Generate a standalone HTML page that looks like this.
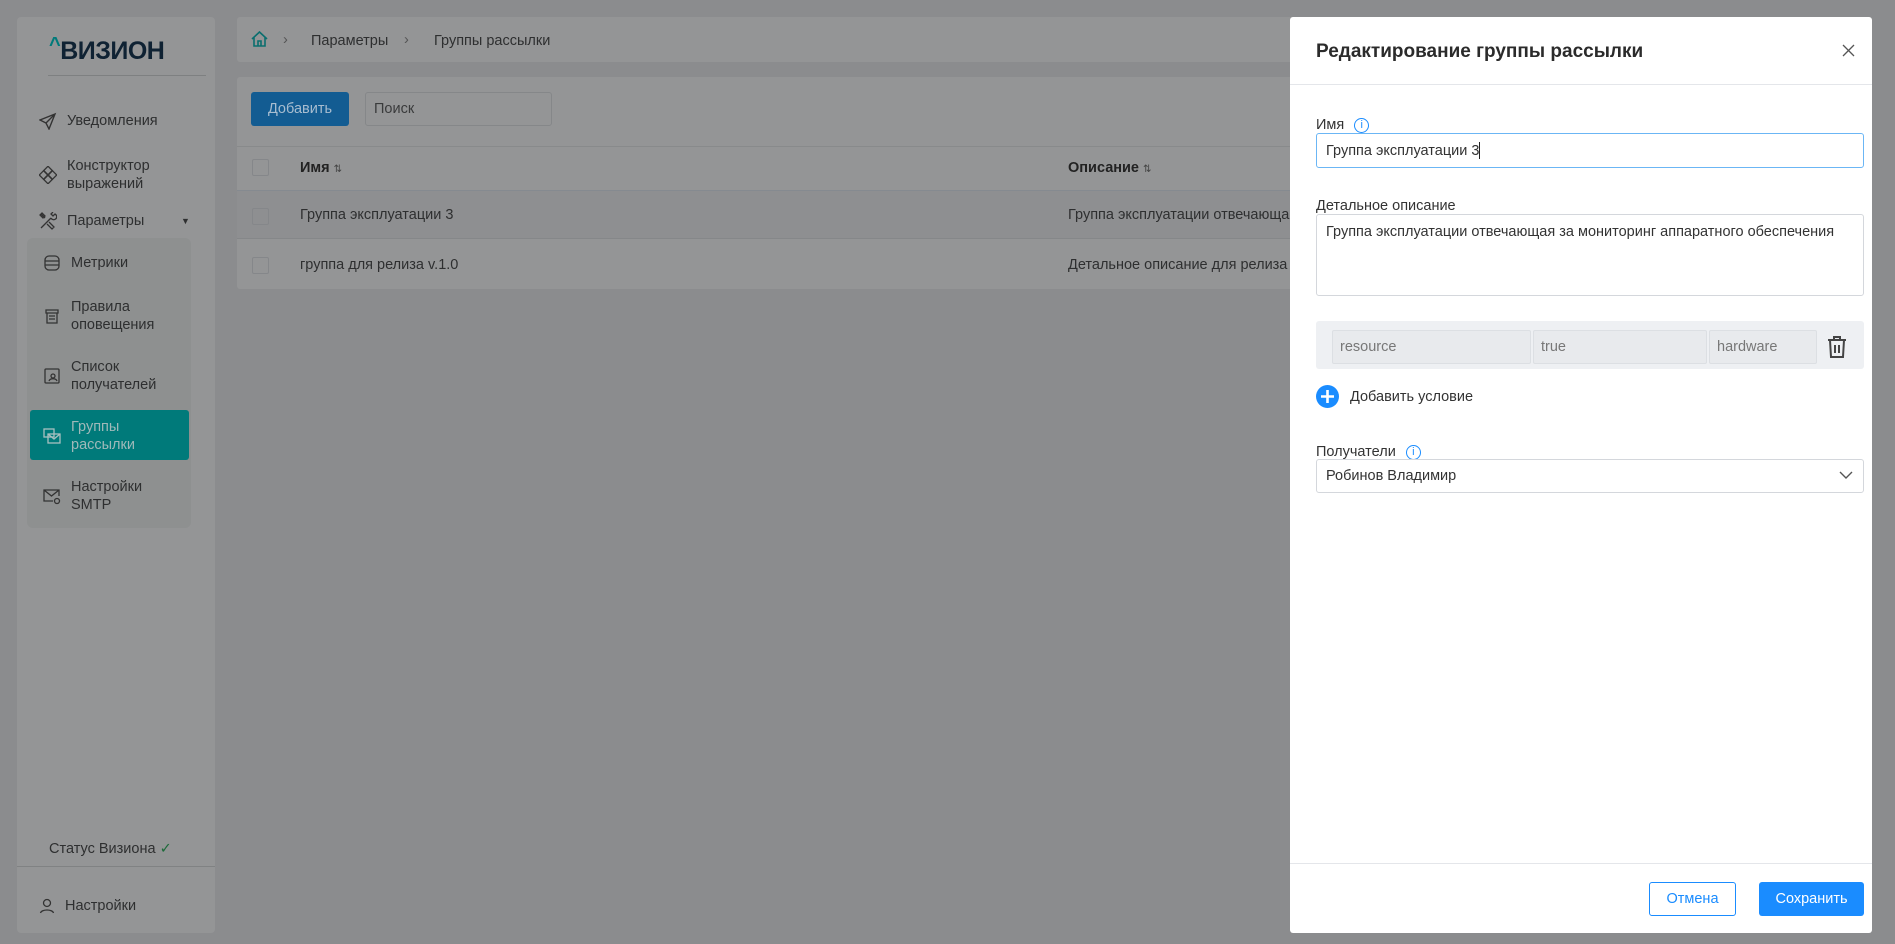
<!DOCTYPE html>
<html><head><meta charset="utf-8"><style>
*{box-sizing:border-box;margin:0;padding:0}
body{width:1895px;height:944px;overflow:hidden;background:#8b8c8e;font-family:"Liberation Sans",sans-serif;font-size:14.5px;color:#2a2a2a;position:relative}
.abs{position:absolute}
.side{left:17px;top:17px;width:198px;height:916px;background:#949596;border-radius:4px}
.mi{position:absolute;left:40px;color:#2e2f30;font-size:14.5px;line-height:18px;display:flex;align-items:center}
.mi svg{margin-right:10px;flex:none}
.card{background:#949596;border-radius:3px}
.dr{left:1290px;top:17px;width:582px;height:916px;background:#fff;border-radius:3px}
.lab{position:absolute;left:26px;font-size:14.5px;color:#333;display:flex;align-items:center}
.inp{position:absolute;left:26px;width:548px;border:1px solid #d4d7dc;border-radius:3px;padding:0 9px;display:flex;align-items:center;font-size:14.5px;color:#333}
.info{display:inline-block;width:15px;height:15px;border:1.3px solid #1a8cff;border-radius:50%;color:#1a8cff;font-size:11px;text-align:center;line-height:13px;margin-left:10px}
</style></head><body>
<div class="abs side">
 <div class="abs" style="left:32px;top:20px;font-size:25px;font-weight:bold;color:#0f2233;letter-spacing:-0.5px"><span style="color:#007a7a;font-size:20px;vertical-align:top;position:relative;top:-3px">^</span>ВИЗИОН</div>
 <div class="abs" style="left:31px;top:58px;width:158px;height:1px;background:#7e8081"></div>
 <div class="mi" style="top:95px;left:22px"><svg width="18" height="18" viewBox="0 0 18 18" fill="none" stroke="#333" stroke-width="1.4"><path d="M16 2L1 8l6 3 3 6z M16 2L7 11"/></svg>Уведомления</div>
 <div class="mi" style="top:140px;left:22px"><svg width="18" height="18" viewBox="0 0 18 18" fill="none" stroke="#333" stroke-width="1.3"><rect x="6" y="1.5" width="6" height="6" transform="rotate(45 9 4.5)"/><rect x="6" y="10.5" width="6" height="6" transform="rotate(45 9 13.5)"/><rect x="1.5" y="6" width="6" height="6" transform="rotate(45 4.5 9)"/><rect x="10.5" y="6" width="6" height="6" transform="rotate(45 13.5 9)"/></svg>Конструктор<br>выражений</div>
 <div class="mi" style="top:195px;left:22px"><svg width="18" height="18" viewBox="0 0 18 18" fill="none" stroke="#333" stroke-width="1.3"><path d="M2 16L12 6M12 6a3 3 0 1 0 4-4l-2 2-2-2 2-2M2 2l4 4M3 1l3 3-2 2-3-3zM10 10l5 5-2 2-5-5"/></svg>Параметры<span style="position:absolute;left:142px;font-size:9px">▼</span></div>
 <div class="abs" style="left:10px;top:221px;width:164px;height:290px;background:#8e9090;border-radius:6px"></div>
 <div class="mi" style="top:237px;left:26px"><svg width="18" height="18" viewBox="0 0 18 18" fill="none" stroke="#333" stroke-width="1.3"><rect x="2" y="2" width="14" height="14" rx="4"/><path d="M2 7h14M2 11h14"/></svg>Метрики</div>
 <div class="mi" style="top:281px;left:26px"><svg width="18" height="18" viewBox="0 0 18 18" fill="none" stroke="#333" stroke-width="1.3"><path d="M3 3h12v3H3zM4 6v10h10V6M6 9h6M6 12h6"/></svg>Правила<br>оповещения</div>
 <div class="mi" style="top:341px;left:26px"><svg width="18" height="18" viewBox="0 0 18 18" fill="none" stroke="#333" stroke-width="1.3"><rect x="2" y="2" width="14" height="14" rx="1"/><circle cx="10" cy="9" r="2"/><path d="M6 14c1-3 7-3 8 0"/></svg>Список<br>получателей</div>
 <div class="abs" style="left:13px;top:393px;width:159px;height:50px;background:#007a7a;border-radius:3px"></div>
 <div class="mi" style="top:401px;left:26px;color:#9fb9b9"><svg width="18" height="18" viewBox="0 0 18 18" fill="none" stroke="#a8c0c0" stroke-width="1.3"><rect x="1" y="2" width="10" height="8"/><rect x="5" y="7" width="12" height="9"/><path d="M5 7l6 5 6-5"/></svg>Группы<br>рассылки</div>
 <div class="mi" style="top:461px;left:26px"><svg width="18" height="18" viewBox="0 0 18 18" fill="none" stroke="#333" stroke-width="1.3"><path d="M10 14H1V3h15v6M1 3l7.5 6L16 3"/><circle cx="14" cy="14" r="2.5"/></svg>Настройки<br>SMTP</div>
 <div class="abs" style="left:32px;top:824px;font-size:14.5px;color:#2e2f30">Статус Визиона <span style="color:#1d6a3a">✓</span></div>
 <div class="abs" style="left:0;top:849px;width:198px;height:1px;background:#808283"></div>
 <div class="mi" style="top:880px;left:22px"><svg width="16" height="16" viewBox="0 0 16 16" fill="none" stroke="#333" stroke-width="1.3"><circle cx="8" cy="5" r="3.5"/><path d="M1.5 15c1-4 12-4 13 0"/></svg>Настройки</div>
</div>
<div class="abs card" style="left:237px;top:17px;width:1100px;height:45px">
 <svg class="abs" style="left:14px;top:14px" width="17" height="16" viewBox="0 0 17 16" fill="none" stroke="#0a6e6e" stroke-width="1.6"><path d="M1 8L8.5 1 16 8M3 6v9h11V6M7 15v-5h3v5"/></svg>
 <span class="abs" style="left:46px;top:15px;color:#555">›</span>
 <span class="abs" style="left:74px;top:16px;color:#2e2f30">Параметры</span>
 <span class="abs" style="left:167px;top:15px;color:#555">›</span>
 <span class="abs" style="left:197px;top:16px;color:#2e2f30">Группы рассылки</span>
</div>
<div class="abs card" style="left:237px;top:77px;width:1100px;height:212px">
 <div class="abs" style="left:14px;top:15px;width:98px;height:34px;background:#135c92;border-radius:3px;color:#a8bdd0;text-align:center;line-height:34px">Добавить</div>
 <div class="abs" style="left:128px;top:15px;width:187px;height:34px;border:1px solid #858789;border-radius:3px;padding-left:8px;line-height:32px;color:#3a3b3c">Поиск</div>
 <div class="abs" style="left:0;top:69px;width:1100px;height:1px;background:#888a8b"></div>
 <div class="abs" style="left:0;top:113px;width:1100px;height:49px;background:#8e8f91;border-top:1px solid #858a90;border-bottom:1px solid #858789"></div>
 <div class="abs" style="left:15px;top:82px;width:17px;height:17px;border:1px solid #85878a;border-radius:2px"></div>
 <div class="abs" style="left:15px;top:131px;width:17px;height:17px;border:1px solid #85878a;border-radius:2px"></div>
 <div class="abs" style="left:15px;top:180px;width:17px;height:17px;border:1px solid #85878a;border-radius:2px"></div>
 <div class="abs" style="left:63px;top:83px;font-weight:bold;color:#222">Имя <span style="font-weight:normal;font-size:10px;color:#444">⇅</span></div>
 <div class="abs" style="left:831px;top:83px;font-weight:bold;color:#222">Описание <span style="font-weight:normal;font-size:10px;color:#444">⇅</span></div>
 <div class="abs" style="left:63px;top:130px;color:#2e2f30">Группа эксплуатации 3</div>
 <div class="abs" style="left:831px;top:130px;color:#2e2f30;white-space:nowrap">Группа эксплуатации отвечающа</div>
 <div class="abs" style="left:63px;top:180px;color:#2e2f30">группа для релиза v.1.0</div>
 <div class="abs" style="left:831px;top:180px;color:#2e2f30;white-space:nowrap">Детальное описание для релиза</div>
</div>
<div class="abs dr">
 <div class="abs" style="left:26px;top:24px;font-size:19px;font-weight:bold;color:#2b2b2b">Редактирование группы рассылки</div>
 <svg class="abs" style="left:552px;top:27px" width="13" height="13" viewBox="0 0 13 13" stroke="#555" stroke-width="1.3"><path d="M1 1l11 11M12 1L1 12"/></svg>
 <div class="abs" style="left:0;top:67px;width:582px;height:1px;background:#e4e6ea"></div>
 <div class="lab" style="top:100px">Имя<span class="info">i</span></div>
 <div class="inp" style="top:116px;height:35px;border:1.5px solid #6bb6f5">Группа эксплуатации 3<span style="width:1px;height:17px;background:#222"></span></div>
 <div class="lab" style="top:181px">Детальное описание</div>
 <div class="inp" style="top:197px;height:82px;align-items:flex-start;padding-top:9px">Группа эксплуатации отвечающая за мониторинг аппаратного обеспечения</div>
 <div class="abs" style="left:26px;top:304px;width:548px;height:48px;background:#eef0f3;border-radius:3px"></div>
 <div class="abs" style="left:42px;top:313px;width:199px;height:34px;background:#e8eaed;border:1px solid #dcdfe3;border-radius:2px;padding-left:7px;line-height:33px;color:#777">resource</div>
 <div class="abs" style="left:243px;top:313px;width:174px;height:34px;background:#e8eaed;border:1px solid #dcdfe3;border-radius:2px;padding-left:7px;line-height:33px;color:#777">true</div>
 <div class="abs" style="left:419px;top:313px;width:108px;height:34px;background:#e8eaed;border:1px solid #dcdfe3;border-radius:2px;padding-left:7px;line-height:33px;color:#777">hardware</div>
 <svg class="abs" style="left:536px;top:318px" width="22" height="24" viewBox="0 0 22 24" fill="none" stroke="#444" stroke-width="2"><path d="M2 5h18M8 5V2h6v3M4 5l1 17h12l1-17M9 10v8M13 10v8"/></svg>
 <svg class="abs" style="left:26px;top:368px" width="23" height="23" viewBox="0 0 23 23"><circle cx="11.5" cy="11.5" r="11.5" fill="#1a8cff"/><path d="M11.5 5v13M5 11.5h13" stroke="#fff" stroke-width="2.6"/></svg>
 <div class="abs" style="left:60px;top:372px;color:#333">Добавить условие</div>
 <div class="lab" style="top:427px">Получатели<span class="info">i</span></div>
 <div class="inp" style="top:442px;height:34px">Робинов Владимир<svg style="position:absolute;right:10px;top:11px" width="14" height="9" viewBox="0 0 14 9" fill="none" stroke="#555" stroke-width="1.4"><path d="M1 1l6 6 6-6"/></svg></div>
 <div class="abs" style="left:0;top:846px;width:582px;height:1px;background:#e4e6ea"></div>
 <div class="abs" style="left:359px;top:865px;width:87px;height:34px;border:1px solid #1a8cff;border-radius:3px;color:#1a8cff;text-align:center;line-height:32px">Отмена</div>
 <div class="abs" style="left:469px;top:865px;width:105px;height:34px;background:#1a8cff;border-radius:3px;color:#fff;text-align:center;line-height:34px">Сохранить</div>
</div>
</body></html>
